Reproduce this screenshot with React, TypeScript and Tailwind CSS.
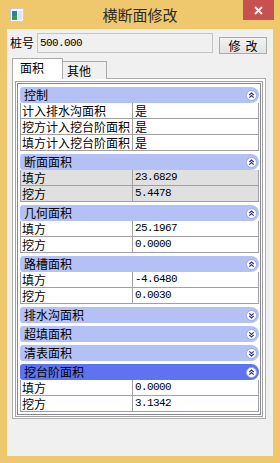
import React from "react";

const CJK = '"Noto Sans CJK SC", "Noto Sans", sans-serif';
const MONO = '"Liberation Mono", "Noto Sans CJK SC", monospace';

function Chevron({ up }: { up: boolean }) {
  return (
    <svg width="11" height="11" viewBox="0 0 11 11" className="mr-[2px] shrink-0">
      <circle cx="5.5" cy="5.5" r="5" fill="#ffffff" stroke="#9AA8EC" strokeWidth="1" />
      {up ? (
        <g fill="none" stroke="#27349A" strokeWidth="1.2">
          <path d="M3.3 5 L5.5 3 L7.7 5" />
          <path d="M3.3 7.6 L5.5 5.6 L7.7 7.6" />
        </g>
      ) : (
        <g fill="none" stroke="#27349A" strokeWidth="1.2">
          <path d="M3.3 3.4 L5.5 5.4 L7.7 3.4" />
          <path d="M3.3 6 L5.5 8 L7.7 6" />
        </g>
      )}
    </svg>
  );
}

type Row = [string, string];

function Section({
  title,
  rows,
  gray,
  selected,
}: {
  title: string;
  rows?: Row[];
  gray?: boolean;
  selected?: boolean;
}) {
  const expanded = !!rows;
  return (
    <div className="flex flex-col">
      <div
        className={
          "h-[16px] flex items-center justify-between rounded-l-[3px] rounded-r-[8px] pl-[4px] " +
          (selected ? "bg-[#5F73F0]" : "bg-[#B4C1F4]")
        }
      >
        <span className="text-[12px] leading-[16px] text-black">{title}</span>
        <Chevron up={expanded} />
      </div>
      {rows &&
        rows.map(([k, v], i) => (
          <div
            key={i}
            className={
              "h-[16px] flex border-l border-r border-b border-[#A0A0A0] " +
              (gray ? "bg-[#E0E0E0]" : "bg-white")
            }
          >
            <div className="w-[112px] border-r border-[#A0A0A0] pl-[1px] text-[12px] leading-[15px] text-black whitespace-nowrap overflow-hidden">
              {k}
            </div>
            <div
              className="flex-1 pl-[2px] text-[12px] leading-[15px] text-black whitespace-nowrap"
              style={/^[-\d]/.test(v) ? { fontFamily: MONO, fontSize: 11, letterSpacing: "-0.6px" } : undefined}
            >
              {v}
            </div>
          </div>
        ))}
    </div>
  );
}

export default function App() {
  return (
    <div className="w-[280px] h-[463px] bg-[#EFC86E] flex flex-col overflow-hidden" style={{ fontFamily: CJK }}>
      {/* title bar */}
      <div className="h-[29px] flex items-start shrink-0">
        <svg width="14" height="14" viewBox="0 0 14 14" className="mt-[8px] ml-[10px] shrink-0">
          <rect x="0.5" y="0.5" width="13" height="13" fill="#F4F6F8" stroke="#C9CDD2" />
          <rect x="2" y="3" width="5" height="9" fill="#2F7FA6" />
          <rect x="2" y="8" width="5" height="4" fill="#3E9A52" />
          <rect x="8" y="3" width="4" height="9" fill="#DDE5EC" />
        </svg>
        <div className="flex-1 text-center pl-[13px] pt-[5px] text-[15px] leading-[20px] text-[#2A2A2A]">横断面修改</div>
        <div className="w-[31px] h-[20px] bg-[#C75050] mr-[6px] flex items-center justify-center shrink-0">
          <svg width="9" height="9" viewBox="0 0 9 9">
            <path d="M1 1 L8 8 M8 1 L1 8" stroke="#ffffff" strokeWidth="1.8" />
          </svg>
        </div>
      </div>

      {/* client */}
      <div className="mx-[7px] h-[427px] bg-[#F0F0F0] flex flex-col shrink-0">
        {/* 桩号 row */}
        <div className="flex items-start mt-[4px] h-[20px]">
          <div className="ml-[3px] w-[24px] text-[12px] leading-[20px] text-black whitespace-nowrap">桩号</div>
          <div className="ml-[3px] w-[176px] h-[20px] border border-[#C4C4C4] bg-[#F0F0F0] flex items-center pl-[2px]">
            <span className="text-black" style={{ fontFamily: MONO, fontSize: 11, letterSpacing: "-0.6px" }}>
              500.000
            </span>
          </div>
          <div className="ml-[6px] mt-[4px] w-[48px] h-[17px] border border-[#ACACAC] bg-gradient-to-b from-[#F2F2F2] to-[#E3E3E3] flex items-center justify-center gap-[5px] text-[12px] leading-[15px] text-black">
            <span>修</span>
            <span>改</span>
          </div>
        </div>

        {/* tabs */}
        <div className="flex items-end ml-[5px] mt-[5px] h-[21px] -mb-[1px] relative z-10">
          <div className="w-[51px] h-[21px] bg-white border border-b-0 border-[#ACACAC] pl-[7px] text-[12px] leading-[18px] text-black">
            面积
          </div>
          <div className="w-[44px] h-[18px] bg-[#F0F0F0] border border-l-0 border-b-0 border-[#ACACAC] pl-[4px] text-[12px] leading-[17px] text-black">
            其他
          </div>
        </div>

        {/* panel */}
        <div className="ml-[5px] w-[254px] border border-[#ACACAC] bg-white pt-[2px] pl-[2px] pr-[2px] pb-[1px]">
          <div className="border border-[#A0A0A0] p-[1px]">
            <div className="border border-[#828790] bg-white pt-[3px] pl-[2px] pr-[1px] pb-[2px] flex flex-col gap-[3px]">
              <Section
                title="控制"
                rows={[
                  ["计入排水沟面积", "是"],
                  ["挖方计入挖台阶面积", "是"],
                  ["填方计入挖台阶面积", "是"],
                ]}
              />
              <Section
                title="断面面积"
                gray
                rows={[
                  ["填方", "23.6829"],
                  ["挖方", "5.4478"],
                ]}
              />
              <Section
                title="几何面积"
                rows={[
                  ["填方", "25.1967"],
                  ["挖方", "0.0000"],
                ]}
              />
              <Section
                title="路槽面积"
                rows={[
                  ["填方", "-4.6480"],
                  ["挖方", "0.0030"],
                ]}
              />
              <Section title="排水沟面积" />
              <Section title="超填面积" />
              <Section title="清表面积" />
              <Section
                title="挖台阶面积"
                selected
                rows={[
                  ["填方", "0.0000"],
                  ["挖方", "3.1342"],
                ]}
              />
            </div>
          </div>
        </div>
      </div>
    </div>
  );
}
